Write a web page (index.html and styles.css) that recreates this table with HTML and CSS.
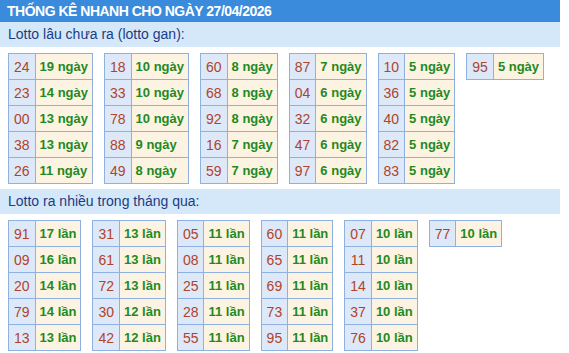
FILE: index.html
```html
<!DOCTYPE html>
<html lang="vi">
<head>
<meta charset="utf-8">
<link rel="stylesheet" href="styles.css">
</head>
<body>
<div class="box">
  <div class="title">THỐNG KÊ NHANH CHO NGÀY 27/04/2026</div>
  <div class="sub">Lotto lâu chưa ra (lotto gan):</div>
  <div class="grid">
    <table><tr><td class="n">24</td><td class="v">19 ngày</td></tr><tr><td class="n">23</td><td class="v">14 ngày</td></tr><tr><td class="n">00</td><td class="v">13 ngày</td></tr><tr><td class="n">38</td><td class="v">13 ngày</td></tr><tr><td class="n">26</td><td class="v">11 ngày</td></tr></table>
    <table><tr><td class="n">18</td><td class="v">10 ngày</td></tr><tr><td class="n">33</td><td class="v">10 ngày</td></tr><tr><td class="n">78</td><td class="v">10 ngày</td></tr><tr><td class="n">88</td><td class="v">9 ngày</td></tr><tr><td class="n">49</td><td class="v">8 ngày</td></tr></table>
    <table><tr><td class="n">60</td><td class="v">8 ngày</td></tr><tr><td class="n">68</td><td class="v">8 ngày</td></tr><tr><td class="n">92</td><td class="v">8 ngày</td></tr><tr><td class="n">16</td><td class="v">7 ngày</td></tr><tr><td class="n">59</td><td class="v">7 ngày</td></tr></table>
    <table><tr><td class="n">87</td><td class="v">7 ngày</td></tr><tr><td class="n">04</td><td class="v">6 ngày</td></tr><tr><td class="n">32</td><td class="v">6 ngày</td></tr><tr><td class="n">47</td><td class="v">6 ngày</td></tr><tr><td class="n">97</td><td class="v">6 ngày</td></tr></table>
    <table><tr><td class="n">10</td><td class="v">5 ngày</td></tr><tr><td class="n">36</td><td class="v">5 ngày</td></tr><tr><td class="n">40</td><td class="v">5 ngày</td></tr><tr><td class="n">82</td><td class="v">5 ngày</td></tr><tr><td class="n">83</td><td class="v">5 ngày</td></tr></table>
    <table><tr><td class="n">95</td><td class="v">5 ngày</td></tr></table>
  </div>
  <div class="sub">Lotto ra nhiều trong tháng qua:</div>
  <div class="grid">
    <table><tr><td class="n">91</td><td class="v">17 lần</td></tr><tr><td class="n">09</td><td class="v">16 lần</td></tr><tr><td class="n">20</td><td class="v">14 lần</td></tr><tr><td class="n">79</td><td class="v">14 lần</td></tr><tr><td class="n">13</td><td class="v">13 lần</td></tr></table>
    <table><tr><td class="n">31</td><td class="v">13 lần</td></tr><tr><td class="n">61</td><td class="v">13 lần</td></tr><tr><td class="n">72</td><td class="v">13 lần</td></tr><tr><td class="n">30</td><td class="v">12 lần</td></tr><tr><td class="n">42</td><td class="v">12 lần</td></tr></table>
    <table><tr><td class="n">05</td><td class="v">11 lần</td></tr><tr><td class="n">08</td><td class="v">11 lần</td></tr><tr><td class="n">25</td><td class="v">11 lần</td></tr><tr><td class="n">28</td><td class="v">11 lần</td></tr><tr><td class="n">55</td><td class="v">11 lần</td></tr></table>
    <table><tr><td class="n">60</td><td class="v">11 lần</td></tr><tr><td class="n">65</td><td class="v">11 lần</td></tr><tr><td class="n">69</td><td class="v">11 lần</td></tr><tr><td class="n">73</td><td class="v">11 lần</td></tr><tr><td class="n">95</td><td class="v">11 lần</td></tr></table>
    <table><tr><td class="n">07</td><td class="v">10 lần</td></tr><tr><td class="n">11</td><td class="v">10 lần</td></tr><tr><td class="n">14</td><td class="v">10 lần</td></tr><tr><td class="n">37</td><td class="v">10 lần</td></tr><tr><td class="n">76</td><td class="v">10 lần</td></tr></table>
    <table><tr><td class="n">77</td><td class="v">10 lần</td></tr></table>
  </div>
</div>
</body>
</html>
```

FILE: styles.css
```css
html, body {
  margin: 0;
  padding: 0;
  background: #ffffff;
}
body {
  font-family: "Liberation Sans", Arial, sans-serif;
}
.box {
  width: 560px;
}
.title {
  height: 22px;
  line-height: 22px;
  background: #3a8bdb;
  color: #ffffff;
  font-weight: bold;
  font-size: 14px;
  letter-spacing: -0.5px;
  padding-left: 7px;
  white-space: nowrap;
}
.sub {
  height: 25px;
  line-height: 25px;
  background: #d5e8fa;
  color: #1b3c84;
  font-size: 14px;
  padding-left: 8px;
}
.grid {
  display: flex;
  align-items: flex-start;
  gap: 11px;
  padding: 6px 0 5px 8px;
}
table {
  border-collapse: collapse;
}
td {
  border: 1px solid #8fb1e1;
  height: 25px;
  padding: 0;
  font-size: 13px;
  white-space: nowrap;
}
td.n {
  background: #dde9f8;
  color: #b0432b;
  font-size: 14px;
  padding: 0 5px;
  text-align: center;
}
td.v {
  background: #fdf3e2;
  color: #1f8a1f;
  font-weight: bold;
  padding: 0 4px;
}
```
